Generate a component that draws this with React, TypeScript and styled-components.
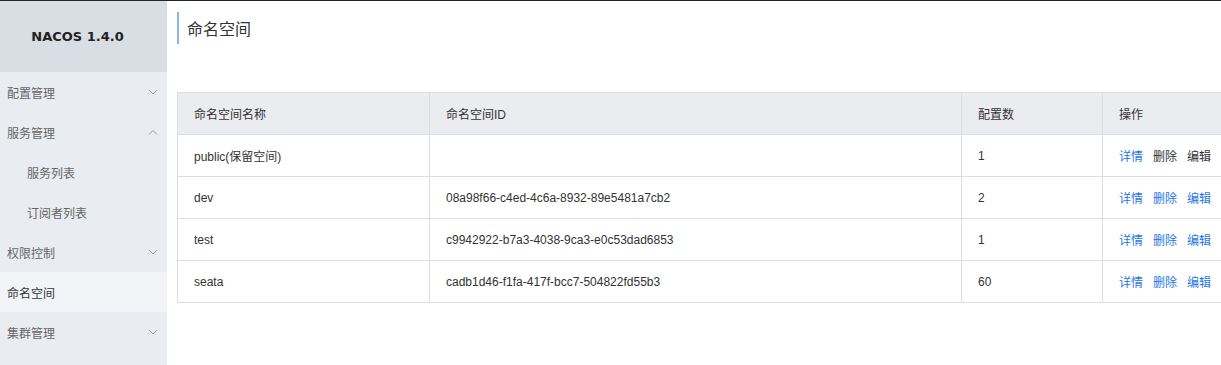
import React from "react";
import styled, { createGlobalStyle } from "styled-components";

const Global = createGlobalStyle`
  html, body { margin: 0; padding: 0; overflow: hidden; background: #fff; }
  body {
    font-family: "Liberation Sans", "Noto Sans CJK SC", sans-serif;
    font-size: 12px;
    color: #333;
  }
`;

const Page = styled.div`
  display: flex;
  height: 365px;
  border-top: 1px solid #22262b;
  box-sizing: border-box;
`;

const Sidebar = styled.aside`
  width: 167px;
  flex: none;
  background: #e9ecf1;
  display: flex;
  flex-direction: column;
`;

const Brand = styled.div`
  height: 71px;
  flex: none;
  background: #d9dde4;
  display: flex;
  align-items: center;
  justify-content: center;
  padding-right: 12px;
  font-family: "DejaVu Sans", "Liberation Sans", sans-serif;
  font-weight: bold;
  font-size: 13px;
  color: #222;
`;

const MenuItem = styled.div<{ $sub?: boolean; $active?: boolean }>`
  height: 40px;
  flex: none;
  display: flex;
  align-items: center;
  justify-content: space-between;
  padding-left: ${(p) => (p.$sub ? 27 : 7)}px;
  padding-right: 9px;
  font-family: "Noto Sans CJK SC", sans-serif;
  font-size: 12px;
  color: ${(p) => (p.$active ? "#333" : "#666")};
  background: ${(p) => (p.$active ? "#f2f3f7" : "transparent")};
`;

const Chevron = ({ up }: { up?: boolean }) => (
  <svg width="10" height="6" viewBox="0 0 10 6">
    <polyline
      points={up ? "1,5.5 5,1.5 9,5.5" : "1,1 5,5 9,1"}
      fill="none"
      stroke="#9aa0a8"
      strokeWidth="1"
    />
  </svg>
);

const Main = styled.main`
  flex: 1;
  min-width: 0;
  overflow: hidden;
  padding: 11px 0 0 10px;
`;

const Title = styled.h1`
  margin: 0;
  height: 32px;
  border-left: 2px solid #88b7e0;
  padding-left: 8px;
  display: flex;
  align-items: center;
  font-family: "Noto Sans CJK SC", sans-serif;
  font-weight: normal;
  font-size: 16px;
  color: #333;
`;

const Table = styled.table`
  margin-top: 48px;
  width: 1090px;
  border-collapse: collapse;
  table-layout: fixed;
`;

const Th = styled.th`
  height: 41px;
  padding: 0 0 0 16px;
  background: #ebecf0;
  border: 1px solid #dcdee3;
  text-align: left;
  font-weight: normal;
  font-size: 12px;
  color: #333;
  font-family: "Liberation Sans", "Noto Sans CJK SC", sans-serif;
`;

const Td = styled.td`
  height: 41px;
  padding: 0 0 0 16px;
  border: 1px solid #dcdee3;
  font-size: 12px;
  color: #333;
  font-family: "Liberation Sans", "Noto Sans CJK SC", sans-serif;
`;

const Actions = styled.div`
  display: flex;
  gap: 10px;
  font-family: "Noto Sans CJK SC", sans-serif;
`;

const Action = styled.a<{ $muted?: boolean }>`
  color: ${(p) => (p.$muted ? "#333" : "#1f77e6")};
  text-decoration: none;
  cursor: pointer;
`;

const rows = [
  { name: "public(保留空间)", id: "", count: "1", pub: true },
  { name: "dev", id: "08a98f66-c4ed-4c6a-8932-89e5481a7cb2", count: "2" },
  { name: "test", id: "c9942922-b7a3-4038-9ca3-e0c53dad6853", count: "1" },
  { name: "seata", id: "cadb1d46-f1fa-417f-bcc7-504822fd55b3", count: "60" },
];

export default function App() {
  return (
    <>
      <Global />
      <Page>
        <Sidebar>
          <Brand>NACOS 1.4.0</Brand>
          <MenuItem>
            配置管理
            <Chevron />
          </MenuItem>
          <MenuItem>
            服务管理
            <Chevron up />
          </MenuItem>
          <MenuItem $sub>服务列表</MenuItem>
          <MenuItem $sub>订阅者列表</MenuItem>
          <MenuItem>
            权限控制
            <Chevron />
          </MenuItem>
          <MenuItem $active>命名空间</MenuItem>
          <MenuItem>
            集群管理
            <Chevron />
          </MenuItem>
        </Sidebar>
        <Main>
          <Title>命名空间</Title>
          <Table>
            <colgroup>
              <col style={{ width: 252 }} />
              <col style={{ width: 532 }} />
              <col style={{ width: 141 }} />
              <col />
            </colgroup>
            <thead>
              <tr>
                <Th>命名空间名称</Th>
                <Th>命名空间ID</Th>
                <Th>配置数</Th>
                <Th>操作</Th>
              </tr>
            </thead>
            <tbody>
              {rows.map((r) => (
                <tr key={r.name}>
                  <Td>{r.name}</Td>
                  <Td>{r.id}</Td>
                  <Td>{r.count}</Td>
                  <Td>
                    <Actions>
                      <Action>详情</Action>
                      <Action $muted={r.pub}>删除</Action>
                      <Action $muted={r.pub}>编辑</Action>
                    </Actions>
                  </Td>
                </tr>
              ))}
            </tbody>
          </Table>
        </Main>
      </Page>
    </>
  );
}
